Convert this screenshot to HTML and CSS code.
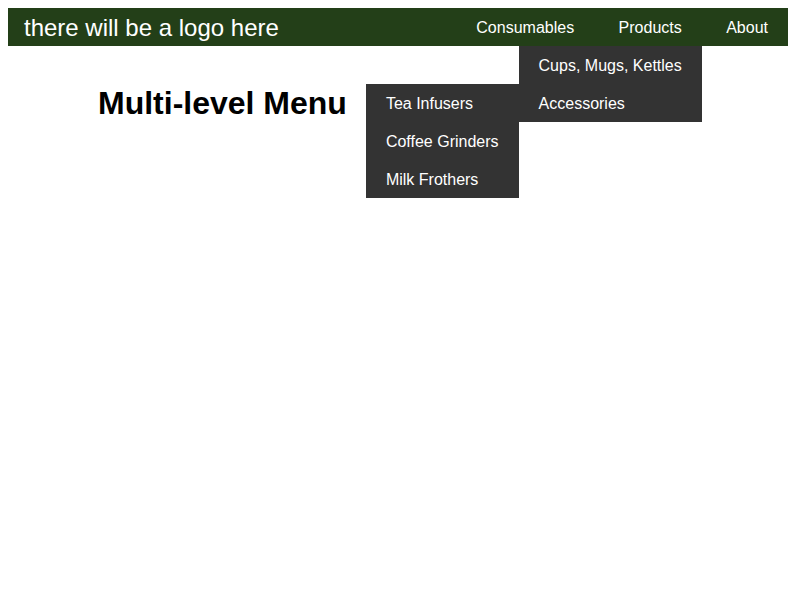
FILE: index.html
```html
<!DOCTYPE html>
<html>
<head>
<meta charset="utf-8">
<link rel="stylesheet" href="styles.css">
</head>
<body>
<header class="bar">
  <div class="logo">there will be a logo here</div>
  <nav>
    <ul class="menu">
      <li class="item"><a href="#">Consumables</a></li>
      <li class="item"><a href="#">Products</a>
        <ul class="drop">
          <li class="sub"><a href="#">Cups, Mugs, Kettles</a></li>
          <li class="sub"><a href="#">Accessories</a>
            <ul class="drop2">
              <li class="sub2"><a href="#">Tea Infusers</a></li>
              <li class="sub2"><a href="#">Coffee Grinders</a></li>
              <li class="sub2"><a href="#">Milk Frothers</a></li>
            </ul>
          </li>
        </ul>
      </li>
      <li class="item"><a href="#">About</a></li>
    </ul>
  </nav>
</header>
<main class="content">
  <h1 class="title">Multi-level Menu</h1>
</main>
</body>
</html>
```
FILE: styles.css
```css
html, body {
  min-height: 100%;
}
body {
  margin: 8px;
  font-family: "Liberation Sans", Arial, sans-serif;
  background: #fff;
}
.bar {
  display: flex;
  justify-content: space-between;
  align-items: center;
  background: #233f18;
  height: 38px;
  color: #fff;
}
.logo {
  padding-left: 16px;
  font-size: 24px;
  line-height: 38px;
  padding-top: 1px;
}
.menu {
  list-style: none;
  margin: 0;
  padding: 0;
  font-size: 16px;
  white-space: nowrap;
}
.item {
  display: inline-block;
  position: relative;
  vertical-align: top;
}
.menu a {
  display: block;
  padding: 1px 20px 0;
  height: 38px;
  line-height: 38px;
  box-sizing: border-box;
  color: #fff;
  text-decoration: none;
}
.drop, .drop2 {
  position: absolute;
  list-style: none;
  margin: 0;
  padding: 0;
  background: #333;
}
.drop {
  top: 100%;
  right: 0;
}
.drop2 {
  top: 0;
  right: 100%;
  width: max-content;
}
.sub {
  position: relative;
}
.content {
  padding-left: 90px;
  min-height: 520px;
}
.title {
  margin: 39px 0 0;
  font-size: 32px;
  font-weight: bold;
}
```
